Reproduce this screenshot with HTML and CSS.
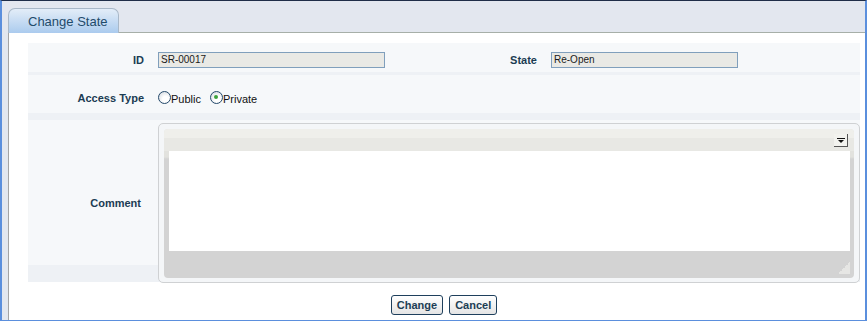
FILE: index.html
```html
<!DOCTYPE html>
<html lang="en">
<head>
  <meta charset="UTF-8">
  <meta name="viewport" content="width=device-width, initial-scale=1.0">
  <title>Change State</title>
  <link rel="stylesheet" href="styles.css">
</head>
<body>
  <div class="window">
    <div class="tabbar">
      <div class="tab">Change State</div>
    </div>
    <div class="panel">
      <form class="form" id="changeStateForm">
        <div class="row row-id">
          <label class="lbl" for="srId">ID</label>
          <div class="field"><input type="text" id="srId" class="ro ro-id" value="SR-00017" readonly></div>
          <label class="lbl" for="srState">State</label>
          <div class="field"><input type="text" id="srState" class="ro ro-state" value="Re-Open" readonly></div>
        </div>
        <div class="row row-access">
          <span class="lbl">Access Type</span>
          <div class="field radios">
            <span class="radio"></span><span class="radio-text">Public</span>
            <span class="radio checked"></span><span class="radio-text">Private</span>
          </div>
        </div>
        <div class="row row-comment">
          <span class="lbl">Comment</span>
          <div class="comment-box">
            <div class="editor">
              <div class="toolbar">
                <span class="dropdown">
                  <svg width="8" height="5" viewBox="0 0 8 5"><rect x="0" y="0" width="8" height="1" fill="#111"/><polygon points="1,2 7,2 4,5" fill="#111"/></svg>
                </span>
              </div>
              <div class="text-area"></div>
              <div class="editor-foot"></div>
              <span class="grip"></span>
            </div>
          </div>
        </div>
      </form>
      <div class="actions">
        <button type="button" class="btn">Change</button>
        <button type="button" class="btn">Cancel</button>
      </div>
    </div>
  </div>
</body>
</html>
```

FILE: styles.css
```css
body {
  margin: 0;
  padding: 0;
  font-family: 'Liberation Sans', Arial, sans-serif;
}
.window {
  width: 867px;
  height: 321px;
  box-sizing: border-box;
  border-top: 1px solid #1f2d48;
  border-left: 2px solid #5b8fdd;
  border-right: 2px solid #5b8fdd;
  border-bottom: 1px solid #5b8fdd;
  background-color: #e3e7ef;
  padding-left: 6px;
  display: flex;
  flex-direction: column;
}
.tabbar {
  height: 31px;
  border-bottom: 1px solid #a7afa8;
  display: flex;
  align-items: flex-end;
}
.tab {
  width: 111px;
  height: 25px;
  box-sizing: border-box;
  margin-bottom: -1px;
  border: 1px solid #a9b8c8;
  border-bottom: none;
  border-radius: 7px 7px 0 0;
  background: linear-gradient(to bottom, #e3edf8, #abcbee);
  color: #1f4b6b;
  font-size: 13px;
  line-height: 26px;
  padding-left: 19px;
}
.panel {
  flex: 1;
  background-color: #fff;
  border-left: 1px solid #a4a4a4;
  padding: 10px 5px 0 19px;
}
.form {
  display: flex;
  flex-direction: column;
}
.row {
  display: grid;
  grid-template-columns: 130px 280px 113px 1fr;
  align-items: center;
}
.row-id {
  height: 32px;
  background: linear-gradient(to bottom, #f6f8fa 29px, #eef1f5 29px);
}
.row-access {
  height: 45px;
  background: linear-gradient(to bottom, #f6f8fa 38px, #eef1f5 38px);
}
.row-comment {
  height: 162px;
  align-items: start;
  background: linear-gradient(to bottom, #f6f8fa 145px, #eef1f5 145px);
}
.lbl {
  text-align: right;
  padding-right: 14px;
  font-size: 11px;
  font-weight: bold;
  color: #1b3c53;
}
.row-id .lbl {
  padding-top: 1px;
}
.row-comment .lbl {
  align-self: center;
  padding-right: 17px;
  padding-top: 2px;
}
.ro {
  display: block;
  height: 16px;
  box-sizing: border-box;
  margin: 1px 0 0 0;
  border: 1px solid #809fbc;
  background-color: #e9e9e5;
  font-family: 'Liberation Sans', Arial, sans-serif;
  font-size: 10px;
  color: #1a1a1a;
  padding: 0 2px;
  outline: none;
}
.ro-id {
  width: 227px;
}
.ro-state {
  width: 187px;
}
.radios {
  display: flex;
  align-items: center;
  grid-column: 2 / 5;
  font-size: 11px;
  color: #111;
  padding-bottom: 1px;
}
.radio {
  width: 13px;
  height: 13px;
  box-sizing: border-box;
  border: 1px solid #24496b;
  border-radius: 50%;
  background: radial-gradient(circle at 60% 65%, #ffffff 30%, #cdd3da 100%);
  position: relative;
}
.radio.checked::after {
  content: "";
  position: absolute;
  left: 3.5px;
  top: 3.5px;
  width: 4px;
  height: 4px;
  border-radius: 50%;
  background-color: #3da23d;
}
.radio-text {
  margin-top: 4px;
  margin-right: 9px;
}
.comment-box {
  grid-column: 2 / 5;
  margin-top: 3px;
  height: 160px;
  box-sizing: border-box;
  border: 1px solid #cfd1d3;
  border-radius: 5px;
  background-color: #f4f6f8;
  padding: 5px 5px 4px 5px;
}
.editor {
  height: 100%;
  border-radius: 4px;
  overflow: hidden;
  background: linear-gradient(to bottom, #e2e2de 0, #e2e2de 28px, #d3d3d3 30px);
  display: flex;
  flex-direction: column;
  position: relative;
}
.toolbar {
  height: 22px;
  background: linear-gradient(to bottom, #efefeb 9px, #e8e8e4 9px);
  display: flex;
  justify-content: flex-end;
  align-items: flex-start;
}
.dropdown {
  width: 14px;
  height: 13px;
  box-sizing: border-box;
  margin: 5px 6px 0 0;
  background-color: #f2f2ee;
  border-right: 1px solid #555;
  border-bottom: 1px solid #555;
  display: flex;
  justify-content: center;
  align-items: center;
}
.text-area {
  height: 100px;
  margin: 0 4px 0 5px;
  background-color: #fff;
}
.editor-foot {
  flex: 1;
}
.grip {
  position: absolute;
  right: 4px;
  bottom: 4px;
  width: 12px;
  height: 12px;
  background: linear-gradient(to bottom right, transparent 50%, #e6e6e4 50%);
}
.actions {
  display: flex;
  justify-content: center;
  gap: 6px;
  margin-top: 13px;
}
.btn {
  height: 20px;
  box-sizing: border-box;
  border: 1px solid #1e3f5c;
  border-radius: 3px;
  background: linear-gradient(to bottom, #ffffff, #e4e4e4);
  font-family: 'Liberation Sans', Arial, sans-serif;
  font-size: 11px;
  font-weight: bold;
  color: #1d3e55;
  padding: 0 5px;
  cursor: pointer;
}
.btn:hover {
  background: linear-gradient(to bottom, #ffffff, #d8d8d8);
}
```
